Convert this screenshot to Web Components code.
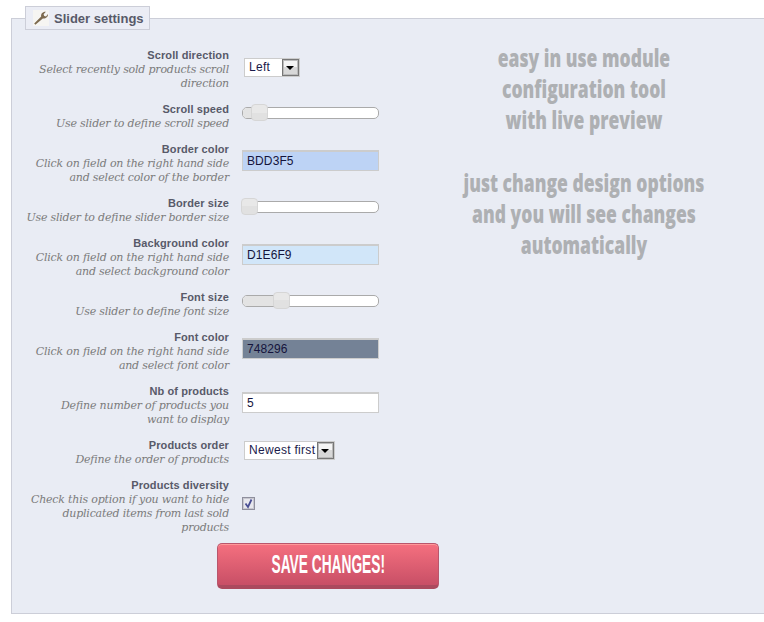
<!DOCTYPE html>
<html><head><meta charset="utf-8"><style>
html,body{margin:0;padding:0;background:#fff;overflow:hidden}
</style></head><body>
<settings-panel legend="Slider settings">
<setting-row label="Scroll direction" desc="Select recently sold products scroll direction"><fake-select w="56" value="Left"></fake-select></setting-row>
<setting-row label="Scroll speed" desc="Use slider to define scroll speed"><fake-slider pos="8"></fake-slider></setting-row>
<setting-row label="Border color" desc="Click on field on the right hand side and select color of the border"><fake-input bg="#bdd3f5" value="BDD3F5"></fake-input></setting-row>
<setting-row label="Border size" desc="Use slider to define slider border size"><fake-slider pos="-2"></fake-slider></setting-row>
<setting-row label="Background color" desc="Click on field on the right hand side and select background color"><fake-input bg="#d1e6f9" value="D1E6F9"></fake-input></setting-row>
<setting-row label="Font size" desc="Use slider to define font size"><fake-slider pos="30"></fake-slider></setting-row>
<setting-row label="Font color" desc="Click on field on the right hand side and select font color"><fake-input bg="#748296" value="748296"></fake-input></setting-row>
<setting-row label="Nb of products" dw="190" desc="Define number of products you want to display"><fake-input bg="#fff" value="5"></fake-input></setting-row>
<setting-row label="Products order" desc="Define the order of products"><fake-select w="91" value="Newest first"></fake-select></setting-row>
<setting-row label="Products diversity" desc="Check this option if you want to hide duplicated items from last sold products"><fake-check></fake-check></setting-row>
<save-button slot="button">SAVE CHANGES!</save-button>
<promo-note slot="aside"></promo-note>
</settings-panel>
<script>
function def(name,html,init){customElements.define(name,class extends HTMLElement{connectedCallback(){if(this.shadowRoot)return;const r=this.attachShadow({mode:'open'});r.innerHTML=html(this);if(init)init(this,r);}});}
const attr=(e,n)=>e.getAttribute(n)||'';
def('settings-panel',e=>`<style>
:host{display:block;margin:18px 0 0 11px;height:596px;box-sizing:border-box;border:1px solid #ccced8;border-right:0;background:#e9ecf4;position:relative;font-family:"Liberation Sans",Arial,sans-serif}
.legend{position:absolute;left:13px;top:-13px;height:22px;border:1px solid #ccced8;background:#ebedf5;display:flex;align-items:center;gap:5px;padding-left:7px;box-sizing:content-box;font-weight:bold;font-size:13px;color:#585a69;width:116px}
svg{background:#f6f5f2}
.grid{display:flex;padding-top:29px}
.left{width:428px;flex:none;display:flex;flex-direction:column}
.aside{width:288px;flex:none}
</style>
<div class="legend"><svg width="16" height="16" viewBox="0 0 16 16"><path d="M2.4 14.8 L1.2 13.6 L8.2 6.6 C7.6 4.2 9.4 1.5 12.9 1.7 L10.6 4.2 L11.2 5.9 L13 6.4 L15 4 C15.2 7.2 12.2 9 9.8 8.4 Z" fill="#7d6a4e"/></svg><span>${attr(e,'legend')}</span></div>
<div class="grid"><div class="left"><slot></slot><slot name="button"></slot></div><div class="aside"><slot name="aside"></slot></div></div>`);
def('setting-row',e=>`<style>
:host{display:flex;margin-bottom:12px;align-items:center}
.l{width:217px;flex:none;display:flex;flex-direction:column;align-items:flex-end;text-align:right}
.t{font:bold 11px/14px "Liberation Sans",Arial,sans-serif;color:#585a69;letter-spacing:.1px}
.d{width:${attr(e,'dw')||205}px;font:italic 11px/14px "DejaVu Serif",Georgia,serif;color:#7b7b7b;letter-spacing:-.2px;padding-top:1px;margin-bottom:-1px}
.c{margin-left:13px;display:flex;align-items:center;padding-bottom:6px}
</style><div class="l"><div class="t">${attr(e,'label')}</div><div class="d">${attr(e,'desc')}</div></div><div class="c"><slot></slot></div>`);
def('fake-select',e=>`<style>
:host{display:flex;margin:2px 0 0 2px;box-sizing:border-box;height:19px;width:${attr(e,'w')}px;border:1px solid #ccc;background:#fff;font:12px/17px "Liberation Sans",Arial,sans-serif;letter-spacing:.3px;color:#1a1a4a;align-items:center;justify-content:space-between}
span{padding-left:4px}
i{display:block;width:15px;height:15px;border:1px solid #777;box-shadow:inset 0 0 0 1px #bbb;background:linear-gradient(#f4f4f4 50%,#d8d8d8 50%);position:relative;flex:none}
i:after{content:"";position:absolute;left:3px;top:6px;border:4.5px solid transparent;border-top:4px solid #000;border-bottom:0}
</style><span>${attr(e,'value')}</span><i></i>`);
def('fake-slider',e=>`<style>
:host{display:block;position:relative;width:137px;height:12px;box-sizing:border-box;border:1px solid #aaa;border-radius:5px;background:#fff}
.fill{position:absolute;left:0;top:0;bottom:0;width:${+attr(e,'pos')+8}px;background:#e3e3e3;border-radius:4px 0 0 4px}
.h{position:absolute;left:${attr(e,'pos')}px;top:-4px;width:17px;height:17px;box-sizing:border-box;border:1px solid #d6d6d6;border-radius:4px;background:linear-gradient(#e8e8e8 50%,#e1e1e1 50%)}
</style><div class="fill"></div><div class="h"></div>`);
def('fake-input',e=>`<style>
:host{display:block;width:137px;height:21px;box-sizing:border-box;border:1px solid #ccc;border-top-width:2px;background:${attr(e,'bg')};font:12px/17px "Liberation Sans",Arial,sans-serif;letter-spacing:.1px;color:#14143c;padding:1px 0 0 4px}
</style>${attr(e,'value')}`);
def('fake-check',e=>`<style>
:host{display:block;width:13px;height:13px;box-sizing:border-box;border:1px solid #8f8f9d;box-shadow:inset 0 0 0 1px #c8c8d0;background:#e8e8ee}
svg{display:block}
</style><svg width="11" height="11" viewBox="0 0 11 11"><path d="M2.5 5.5 L5 9 L8.5 1.5" fill="none" stroke="#4a4f94" stroke-width="1.8"/></svg>`);
def('save-button',e=>`<style>
:host{display:block;margin:-3px 0 0 205px;width:222px;height:46px;box-sizing:border-box;border-radius:5px;border:1px solid #b9566c;border-bottom:4px solid #ab4a5e;background:linear-gradient(#f5707f,#c84f66);text-align:center;color:#fff;box-shadow:inset 0 1px 0 #f99}
span{display:inline-block;font:bold 25px/41px "Liberation Sans",Arial,sans-serif;transform:scaleX(.55);white-space:nowrap}
</style><span><slot></slot></span>`);
def('promo-note',e=>`<style>
:host{display:flex;justify-content:center;text-align:center;color:#aeb0b3;font:800 24px/31px "Open Sans",sans-serif;margin-top:-6px}
div{flex:none;transform:scaleX(.73);white-space:nowrap}
p{margin:0 0 32px}
</style><div><p>easy in use module<br>configuration tool<br>with live preview</p><p>just change design options<br>and you will see changes<br>automatically</p></div>`);
</script>
</body></html>
